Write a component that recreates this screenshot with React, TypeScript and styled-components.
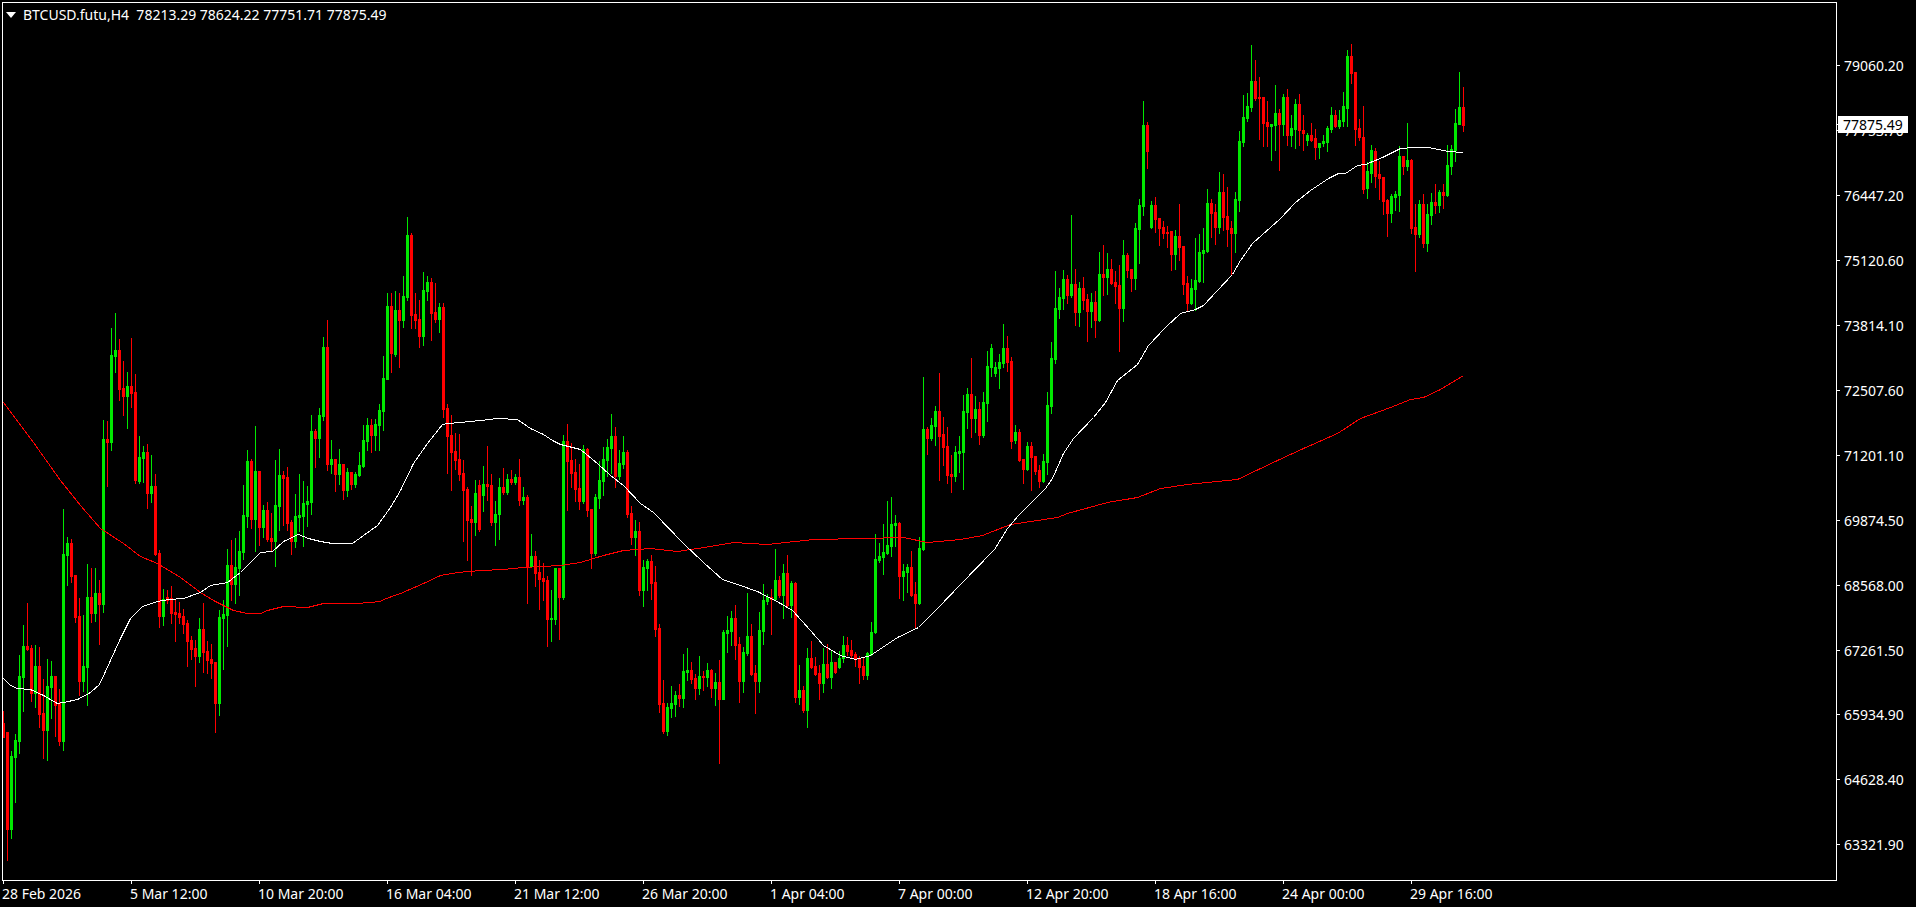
import React from "react";
import styled, { createGlobalStyle } from "styled-components";

const GlobalStyle = createGlobalStyle`
  html, body { margin: 0; padding: 0; background: #000; }
  #root { width: 1916px; height: 907px; overflow: hidden; }
`;

const UI_FONT = `"Noto Sans", "Liberation Sans", sans-serif`;
const BULL = "#00e800";
const BEAR = "#ff0000";

/* One candle per entry: colour, high, body top, body bottom, low (all in page pixels). */
const CANDLES = `
r 711 723 737 737,r 732 732 829 860,g 751 756 829 838,g 734 740 757 802,g 655 676 741 753,g 625 646 677 711,
r 603 646 649 650,r 645 648 693 701,g 645 666 693 707,r 647 666 714 727,r 679 713 730 758,g 659 686 730 760,
g 661 676 687 718,r 676 676 705 736,r 689 703 741 745,g 509 554 741 750,g 537 543 555 585,r 539 543 576 582,
r 575 575 617 622,r 598 616 681 695,g 615 666 681 691,g 564 597 667 705,r 568 597 613 622,g 568 593 613 621,
r 580 593 604 644,g 420 439 604 612,r 421 439 442 486,g 328 355 442 450,g 313 350 356 372,r 339 350 389 400,
r 361 388 396 415,g 372 386 396 428,r 338 386 393 407,r 374 392 480 483,g 436 457 481 483,g 446 452 458 482,
r 444 452 493 508,g 455 486 493 502,r 474 486 554 555,r 550 553 616 627,g 589 599 616 625,r 590 597 600 603,
r 586 598 613 623,r 600 612 614 641,r 602 613 617 623,r 609 616 624 633,r 620 623 641 666,r 636 640 649 659,
r 640 648 656 686,g 618 629 656 662,r 603 629 652 672,r 641 651 660 673,r 644 659 663 678,r 662 662 703 732,
g 610 617 703 715,g 600 614 618 669,g 549 565 615 646,r 540 565 584 600,g 538 567 584 603,g 531 551 568 595,
g 485 515 552 559,g 450 461 516 527,r 459 461 519 528,g 426 471 519 551,r 471 471 527 545,g 505 510 527 537,
r 502 510 539 541,r 513 538 541 550,g 460 505 541 566,g 449 475 506 530,r 471 475 478 525,r 467 477 523 530,
r 520 522 541 554,g 494 516 541 547,g 474 515 517 531,g 481 503 516 546,g 486 501 504 526,g 415 431 502 514,
r 429 431 438 467,g 408 415 438 457,g 337 347 416 420,r 320 347 464 470,g 440 459 464 473,r 459 459 474 491,
g 449 464 474 484,r 464 464 490 499,g 468 472 490 496,r 472 472 484 489,g 472 474 484 487,g 452 465 475 476,
g 425 440 466 467,g 418 425 441 450,r 419 425 435 452,g 419 424 435 450,g 404 410 425 450,g 356 378 411 430,
g 293 306 379 379,r 293 306 353 372,g 291 310 354 356,r 293 310 320 367,g 276 296 320 327,g 217 235 297 300,
r 233 235 315 328,r 293 314 320 328,r 300 319 336 347,g 272 290 336 345,g 276 282 291 300,r 278 282 313 340,
r 283 312 319 322,g 303 307 319 332,r 303 307 409 417,r 404 408 436 473,r 415 435 452 490,r 433 451 460 469,
r 434 459 474 480,r 460 473 490 541,r 487 489 520 560,r 506 519 522 575,g 480 493 522 535,r 480 485 529 531,
g 466 484 495 511,r 446 484 486 500,r 474 485 522 525,g 501 514 522 545,g 478 487 514 539,r 468 487 492 494,
g 474 479 492 494,r 470 479 482 484,g 474 477 482 484,r 459 477 500 505,g 487 497 500 504,r 495 497 566 603,
g 534 556 566 567,r 551 556 573 586,r 560 572 579 609,r 563 578 581 600,r 576 580 619 646,g 590 618 619 641,
g 568 568 619 624,r 568 568 597 639,g 435 441 597 599,r 424 441 461 510,r 443 460 473 487,r 459 472 489 501,
r 464 488 501 509,g 445 449 501 503,r 448 449 510 516,r 509 509 553 568,g 494 497 553 555,g 461 480 498 508,
g 447 459 481 495,g 439 447 460 476,g 414 436 448 473,r 427 436 476 487,g 450 463 476 479,g 436 452 464 468,
r 450 452 514 517,r 506 513 537 544,g 520 531 537 555,r 522 531 590 595,g 560 567 590 606,g 559 561 568 590,
r 555 561 583 599,r 566 582 629 636,r 624 628 704 712,r 680 703 731 733,g 703 707 731 735,g 686 703 708 717,
g 691 695 704 716,r 684 695 698 706,g 654 671 698 707,g 648 670 672 680,r 662 670 679 683,r 674 678 688 699,
g 656 676 688 694,r 671 676 677 690,g 663 670 677 686,r 669 670 688 697,g 673 682 688 705,r 660 682 699 763,
g 630 632 699 699,g 616 630 633 652,g 611 618 631 645,r 605 618 645 659,r 637 644 681 702,g 647 652 681 692,
g 593 636 653 655,r 624 636 674 675,r 665 673 681 713,g 612 630 681 692,g 584 600 631 644,g 594 597 601 604,
r 589 597 599 634,g 549 580 599 600,r 576 580 595 597,g 564 573 595 618,r 555 573 605 607,g 581 583 605 617,
r 582 583 697 702,g 665 690 697 704,r 686 690 710 712,g 648 658 710 727,r 641 658 667 668,r 657 666 674 675,
r 665 673 683 699,g 648 664 683 692,r 644 664 677 678,g 650 662 677 688,r 662 662 672 673,g 651 658 667 668,
g 636 645 658 662,r 637 645 651 655,r 640 650 655 657,r 652 654 659 666,r 656 658 667 683,r 658 666 675 679,
g 652 653 675 679,g 622 632 654 655,g 534 559 632 633,g 543 556 560 562,g 524 552 557 574,g 501 545 553 554,
g 497 524 546 556,g 515 523 525 546,r 522 523 576 598,g 564 571 576 600,g 564 567 572 592,r 551 567 595 596,
r 582 594 603 628,g 537 548 603 604,g 377 429 549 550,r 427 429 438 454,g 418 425 438 440,g 406 411 426 445,
r 373 411 436 480,r 417 434 447 465,r 427 446 475 483,r 455 474 476 492,g 446 452 476 481,g 436 451 453 472,
g 395 411 452 489,g 388 394 412 428,r 358 394 418 437,g 396 409 418 432,r 402 409 435 444,g 392 402 435 437,
g 351 366 403 421,g 344 348 367 376,g 362 367 373 376,g 354 362 368 388,g 324 348 363 367,r 336 348 362 371,
r 357 361 441 448,g 425 432 440 443,r 429 432 460 461,r 459 459 469 483,g 442 446 469 470,r 442 446 457 490,
r 456 456 471 474,r 465 470 481 487,g 454 461 481 482,g 392 405 462 474,g 342 358 406 413,g 271 308 359 363,
g 288 297 309 318,g 270 279 298 309,r 275 279 295 303,g 215 284 295 297,r 269 284 312 325,g 282 288 312 326,
r 277 288 300 309,r 294 299 311 341,g 293 302 311 327,r 291 302 320 337,g 252 274 320 321,r 245 274 277 295,
g 253 269 277 294,r 259 269 283 284,r 271 282 286 303,r 265 285 308 351,g 240 255 308 321,r 253 255 270 277,
r 269 269 278 291,g 223 228 278 289,g 199 205 229 263,g 101 125 206 215,r 122 125 151 168,g 201 205 227 228,
r 197 205 219 232,r 218 218 228 245,r 221 227 233 238,r 226 232 233 247,r 231 231 254 270,g 230 236 254 269,
r 204 236 247 260,r 246 246 284 294,r 276 283 303 310,g 279 288 303 304,g 238 280 289 310,g 234 252 281 282,
g 228 250 253 282,g 189 203 251 252,r 199 203 213 237,r 204 212 227 244,g 172 192 227 233,r 174 192 217 230,
r 187 216 229 246,r 221 228 233 275,g 192 199 233 252,g 131 141 200 211,g 95 117 142 146,g 93 106 118 121,
g 45 81 107 111,r 60 81 98 100,r 77 97 98 139,r 97 97 123 146,r 101 122 126 146,g 124 124 126 160,
g 85 113 125 150,r 109 113 124 170,g 94 97 124 135,r 89 97 135 145,g 115 128 135 146,g 99 104 129 148,
r 94 104 130 145,r 115 130 133 150,g 133 135 140 145,r 123 135 140 141,r 129 138 147 159,g 143 143 147 158,
g 135 141 143 146,g 126 128 142 151,g 107 115 129 132,r 110 115 126 127,g 110 120 126 128,g 92 106 121 126,
g 50 56 108 126,r 44 56 73 83,r 72 72 129 145,r 119 128 137 140,r 106 137 189 193,g 162 171 188 198,
g 145 150 173 182,r 148 151 176 187,r 161 174 178 199,r 177 177 201 214,r 199 200 213 236,g 194 196 213 222,
g 191 194 197 210,g 146 156 195 211,r 156 156 166 174,g 123 160 166 170,r 159 160 228 233,r 204 227 234 271,
g 200 204 234 237,r 194 204 243 247,g 204 214 243 251,g 193 202 215 224,r 184 202 205 213,g 190 192 205 212,
r 184 192 195 208,g 145 165 195 196,g 145 149 166 174,g 109 123 150 161,g 72 107 124 124,r 87 107 125 131`;

const candles = CANDLES.trim()
  .split(",")
  .map((entry) => entry.trim().split(" "))
  .map(([side, high, top, bottom, low], index) => ({
    x: 3 + index * 4,
    fill: side === "g" ? BULL : BEAR,
    high: +high,
    top: +top,
    bottom: +bottom,
    low: +low,
  }));

const FAST_MA =
  "3,678 10,685 17,688 30,689 43,695 57,703 63,702 77,699 90,692 99,684 110,660 120,638 130,618 142,606 157,601 168,599 183,598 200,592 210,585 227,582 240,572 250,562 260,552 272,551 283,541 298,534 308,538 320,541 332,543 352,543 363,535 377,525 390,507 400,490 413,463 427,443 442,424 448,423 460,422 480,420 497,418 517,419 530,428 543,434 552,440 560,444 580,449 597,463 610,475 623,485 640,503 653,512 683,543 703,562 722,579 737,584 757,591 780,603 792,610 810,630 823,645 840,655 855,659 870,655 897,637 918,627 938,607 960,584 994,549 1007,528 1018,515 1045,488 1052,478 1063,453 1073,438 1093,417 1105,402 1117,380 1137,364 1148,345 1165,327 1180,313 1195,309 1203,305 1217,290 1232,274 1240,260 1252,243 1270,227 1280,218 1295,202 1310,190 1328,178 1338,173 1345,173 1357,165 1365,164 1382,157 1400,148 1413,147 1428,147 1448,151 1463,152";

const SLOW_MA =
  "3,402 33,442 60,480 80,505 100,528 123,543 140,556 157,563 180,577 200,592 213,600 233,610 247,613 260,613 267,610 283,606 307,607 323,603 357,603 380,601 383,599 400,593 423,583 440,575 457,572 480,570 503,569 523,567 560,565 580,562 603,555 623,550 650,548 677,551 710,546 733,542 767,544 813,539 863,538 903,537 927,542 960,539 982,535 1010,524 1057,517 1067,513 1107,502 1137,497 1160,488 1187,484 1237,479 1277,460 1303,448 1337,433 1360,418 1390,407 1410,399 1423,397 1440,389 1463,375";

const PRICES = [
  "79060.20", "77753.70", "76447.20", "75120.60", "73814.10", "72507.60", "71201.10",
  "69874.50", "68568.00", "67261.50", "65934.90", "64628.40", "63321.90",
];

const TIMES = [
  "28 Feb 2026", "5 Mar 12:00", "10 Mar 20:00", "16 Mar 04:00", "21 Mar 12:00", "26 Mar 20:00",
  "1 Apr 04:00", "7 Apr 00:00", "12 Apr 20:00", "18 Apr 16:00", "24 Apr 00:00", "29 Apr 16:00",
];

const Terminal = styled.div`
  box-sizing: border-box;
  width: 1916px;
  height: 907px;
  padding: 2px 0 0 2px;
  display: grid;
  grid-template-columns: 1835px 1fr;
  grid-template-rows: 879px 1fr;
  background: #000;
  color: #fff;
  font-family: ${UI_FONT};
  font-size: 14px;
  line-height: 17px;
`;

const ChartFrame = styled.div`
  position: relative;
  box-sizing: border-box;
  border: 1px solid #fff;
  overflow: hidden;
`;

const ChartLegend = styled.div`
  position: absolute;
  top: 3px;
  left: 3px;
  display: flex;
  align-items: center;
  gap: 7px;
  white-space: pre;
`;

const LegendArrow = styled.span`
  width: 0;
  height: 0;
  border-left: 5.5px solid transparent;
  border-right: 5.5px solid transparent;
  border-top: 6px solid #fff;
`;

const ChartCanvas = styled.svg`
  display: block;
`;

const PriceAxis = styled.div`
  position: relative;
  display: flex;
  flex-direction: column;
  padding-top: 31.55px;
`;

const PriceRow = styled.div`
  display: flex;
  align-items: center;
  flex: 0 0 64.9px;
  gap: 4px;
`;

const AxisTick = styled.span`
  width: 3px;
  height: 1px;
  background: #fff;
`;

const CurrentPrice = styled.div`
  position: absolute;
  top: 114px;
  left: 1px;
  box-sizing: border-box;
  width: 70px;
  height: 17px;
  padding-left: 5px;
  background: #fff;
  color: #000;
`;

const CurrentTick = styled.span`
  position: absolute;
  top: 122px;
  left: 0;
  width: 1px;
  height: 1px;
  background: #fff;
`;

const TimeAxis = styled.div`
  grid-column: 1 / -1;
  display: flex;
  padding-left: 1px;
`;

const TimeCell = styled.div`
  flex: 0 0 128px;
  white-space: nowrap;
  display: flex;
  flex-direction: column;
  gap: 1px;
`;

const TimeTick = styled.span`
  width: 1px;
  height: 3px;
  background: #fff;
`;

const TimeLabel = styled.span`
  margin-left: -1px;
`;

const Candle = ({ x, fill, high, top, bottom, low }: (typeof candles)[number]) => (
  <g fill={fill}>
    <rect x={x} y={high} width={1} height={low - high + 1} />
    <rect x={x - 1} y={top} width={3} height={bottom - top + 1} />
  </g>
);

export default function App() {
  return (
    <>
      <GlobalStyle />
      <Terminal>
        <ChartFrame>
          <ChartCanvas width={1833} height={877} viewBox="3 3 1833 877" shapeRendering="crispEdges">
            {candles.map((candle) => (
              <Candle key={candle.x} {...candle} />
            ))}
            <polyline points={SLOW_MA} fill="none" stroke={BEAR} strokeWidth={1} transform="translate(0.5 0.5)" />
            <polyline points={FAST_MA} fill="none" stroke="#fff" strokeWidth={1} transform="translate(0.5 0.5)" />
          </ChartCanvas>
          <ChartLegend>
            <LegendArrow />
            <span>BTCUSD.futu,H4  78213.29 78624.22 77751.71 77875.49</span>
          </ChartLegend>
        </ChartFrame>
        <PriceAxis>
          {PRICES.map((price) => (
            <PriceRow key={price}>
              <AxisTick />
              <span>{price}</span>
            </PriceRow>
          ))}
          <CurrentTick />
          <CurrentPrice>77875.49</CurrentPrice>
        </PriceAxis>
        <TimeAxis>
          {TIMES.map((time) => (
            <TimeCell key={time}>
              <TimeTick />
              <TimeLabel>{time}</TimeLabel>
            </TimeCell>
          ))}
        </TimeAxis>
      </Terminal>
    </>
  );
}
